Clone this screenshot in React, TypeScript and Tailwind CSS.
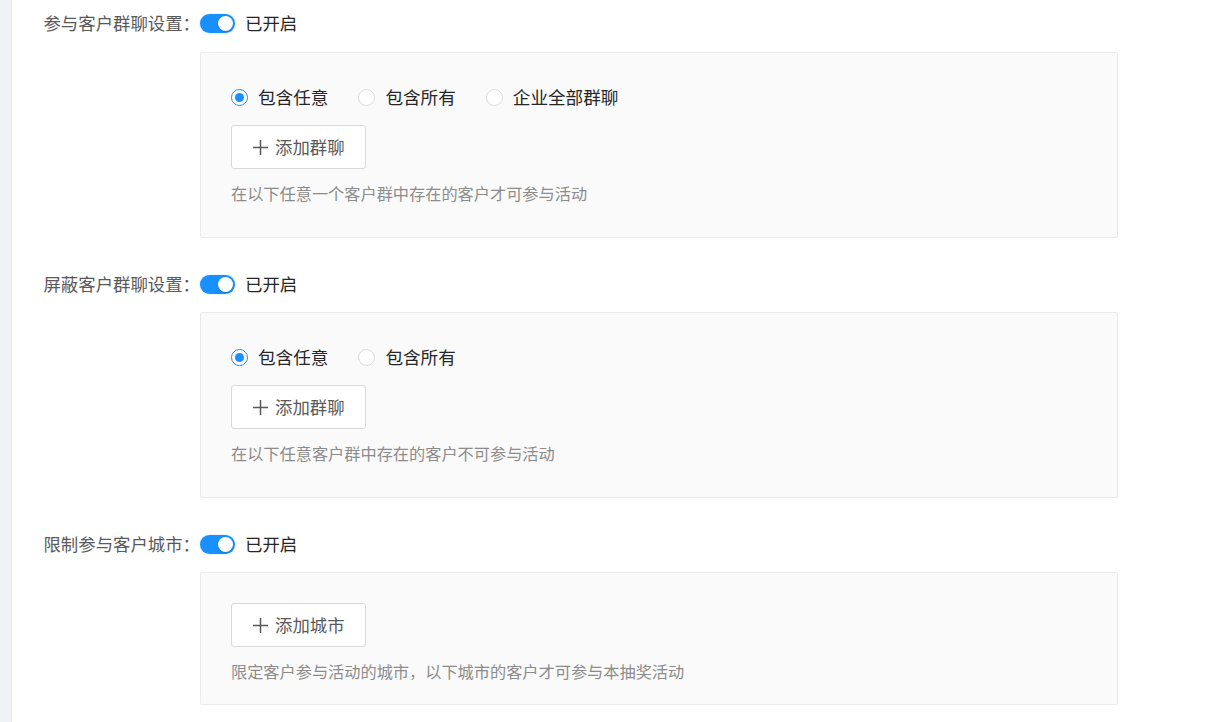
import React from "react";

function Toggle() {
  return (
    <span className="flex h-[19px] w-[35px] items-center justify-end rounded-full bg-[#1890ff] px-[2px] shadow-[0_0_2px_rgba(24,144,255,0.3)]">
      <span className="h-[15px] w-[15px] rounded-full bg-white shadow-[0_1px_2px_rgba(0,35,11,0.2)]" />
    </span>
  );
}

function Radio({ checked, label }: { checked: boolean; label: string }) {
  return (
    <label className="mr-[30px] flex h-6 items-center">
      {checked ? (
        <span className="flex h-[17px] w-[17px] items-center justify-center rounded-full border border-[#1890ff] bg-white">
          <span className="h-[9px] w-[9px] rounded-full bg-[#1890ff]" />
        </span>
      ) : (
        <span className="h-[17px] w-[17px] rounded-full border border-[#d9d9d9] bg-white" />
      )}
      <span className="ml-[10px] text-[17.6px] leading-6 text-[#262626]">{label}</span>
    </label>
  );
}

function AddButton({ text }: { text: string }) {
  return (
    <button className="flex h-[44px] w-[135px] items-center rounded-[3px] border border-[#d9d9d9] bg-white pl-[20px] text-[#595959]">
      <svg width="17" height="17" viewBox="0 0 17 17" className="shrink-0">
        <path d="M8.5 1v15M1 8.5h15" stroke="#595959" strokeWidth="1.5" fill="none" />
      </svg>
      <span className="ml-[6px] text-[17.4px] leading-6">{text}</span>
    </button>
  );
}

function Header({ label }: { label: string }) {
  return (
    <div className="flex h-10 items-center">
      <div className="w-[188px] text-right text-[17.4px] leading-6 text-[#595959]">{label}</div>
      <Toggle />
      <span className="ml-[10px] text-[17.4px] leading-6 text-[#262626]">已开启</span>
    </div>
  );
}

export default function App() {
  return (
    <div className="flex min-h-[722px] bg-white font-['Noto_Sans_CJK_SC',sans-serif]">
      <div className="w-[12px] shrink-0 border-r border-[#e6e8eb] bg-[#f0f2f5]" />
      <div className="flex flex-col pt-[3px]">
        <section>
          <Header label="参与客户群聊设置：" />
          <div className="ml-[188px] mt-[9px] w-[918px] rounded-[2px] border border-[#ebebeb] bg-[#fafafa] pb-[32px] pl-[30px] pt-[32px]">
            <div className="flex">
              <Radio checked label="包含任意" />
              <Radio checked={false} label="包含所有" />
              <Radio checked={false} label="企业全部群聊" />
            </div>
            <div className="mt-4">
              <AddButton text="添加群聊" />
            </div>
            <p className="mt-[12px] text-[16.2px] leading-6 text-[#8c8c8c]">在以下任意一个客户群中存在的客户才可参与活动</p>
          </div>
        </section>
        <section className="mt-[26px]">
          <Header label="屏蔽客户群聊设置：" />
          <div className="ml-[188px] mt-2 w-[918px] rounded-[2px] border border-[#ebebeb] bg-[#fafafa] pb-[32px] pl-[30px] pt-[32px]">
            <div className="flex">
              <Radio checked label="包含任意" />
              <Radio checked={false} label="包含所有" />
            </div>
            <div className="mt-4">
              <AddButton text="添加群聊" />
            </div>
            <p className="mt-[12px] text-[16.2px] leading-6 text-[#8c8c8c]">在以下任意客户群中存在的客户不可参与活动</p>
          </div>
        </section>
        <section className="mt-[26px]">
          <Header label="限制参与客户城市：" />
          <div className="ml-[188px] mt-2 w-[918px] rounded-[2px] border border-[#ebebeb] bg-[#fafafa] pb-[21px] pl-[30px] pt-[30px]">
            <AddButton text="添加城市" />
            <p className="mt-[12px] text-[16.2px] leading-6 text-[#8c8c8c]">限定客户参与活动的城市，以下城市的客户才可参与本抽奖活动</p>
          </div>
        </section>
      </div>
    </div>
  );
}
